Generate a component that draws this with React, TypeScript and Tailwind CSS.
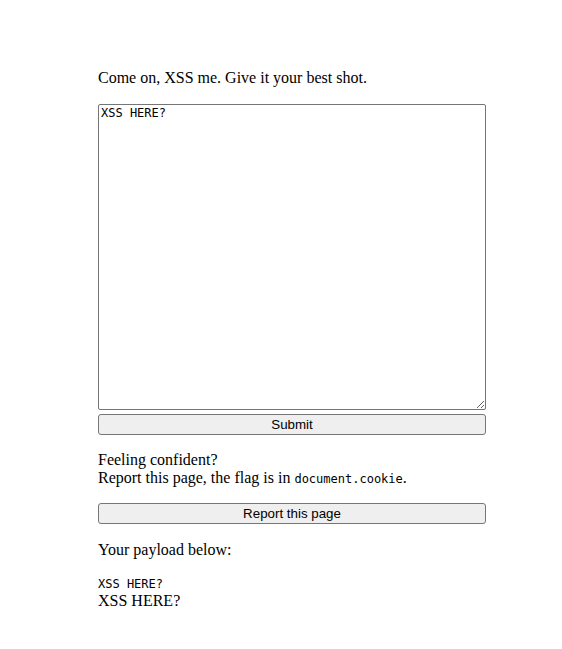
export default function App() {
  const serif = { fontFamily: '"Liberation Serif", "Times New Roman", serif' };
  const mono = '[font-family:"DejaVu_Sans_Mono",monospace]';
  return (
    <div className="min-h-[649px] bg-white text-black pt-[69px] pl-[98px]" style={serif}>
      <div className="w-[388px]">
        <p className="text-[16px] leading-[18px]">Come on, XSS me. Give it your best shot.</p>
        <textarea
          defaultValue="XSS HERE?"
          className={`mt-[17px] block w-[388px] h-[306px] border border-[#767676] rounded-[2px] px-[2px] py-[1px] text-[12px] leading-[15px] ${mono} text-black bg-white resize`}
        />
        <button className="mt-[4px] block w-[388px] h-[21px] bg-[#efefef] border border-[#767676] rounded-[3px] text-[13.33px] [font-family:'Liberation_Sans',Arial,sans-serif] text-black">
          Submit
        </button>
        <p className="mt-[16px] text-[16px] leading-[18px]">
          Feeling confident?
          <br />
          Report this page, the flag is in <code className={`text-[12px] leading-none ${mono}`}>document.cookie</code>.
        </p>
        <button className="mt-[16px] block w-[388px] h-[21px] bg-[#efefef] border border-[#767676] rounded-[3px] text-[13.33px] [font-family:'Liberation_Sans',Arial,sans-serif] text-black">
          Report this page
        </button>
        <p className="mt-[17px] text-[16px] leading-[18px]">Your payload below:</p>
        <div className="mt-[17px]">
          <div className={`text-[12px] leading-[16px] ${mono}`}>XSS HERE?</div>
          <div className="text-[16px] leading-[18px]">XSS HERE?</div>
        </div>
      </div>
    </div>
  );
}
